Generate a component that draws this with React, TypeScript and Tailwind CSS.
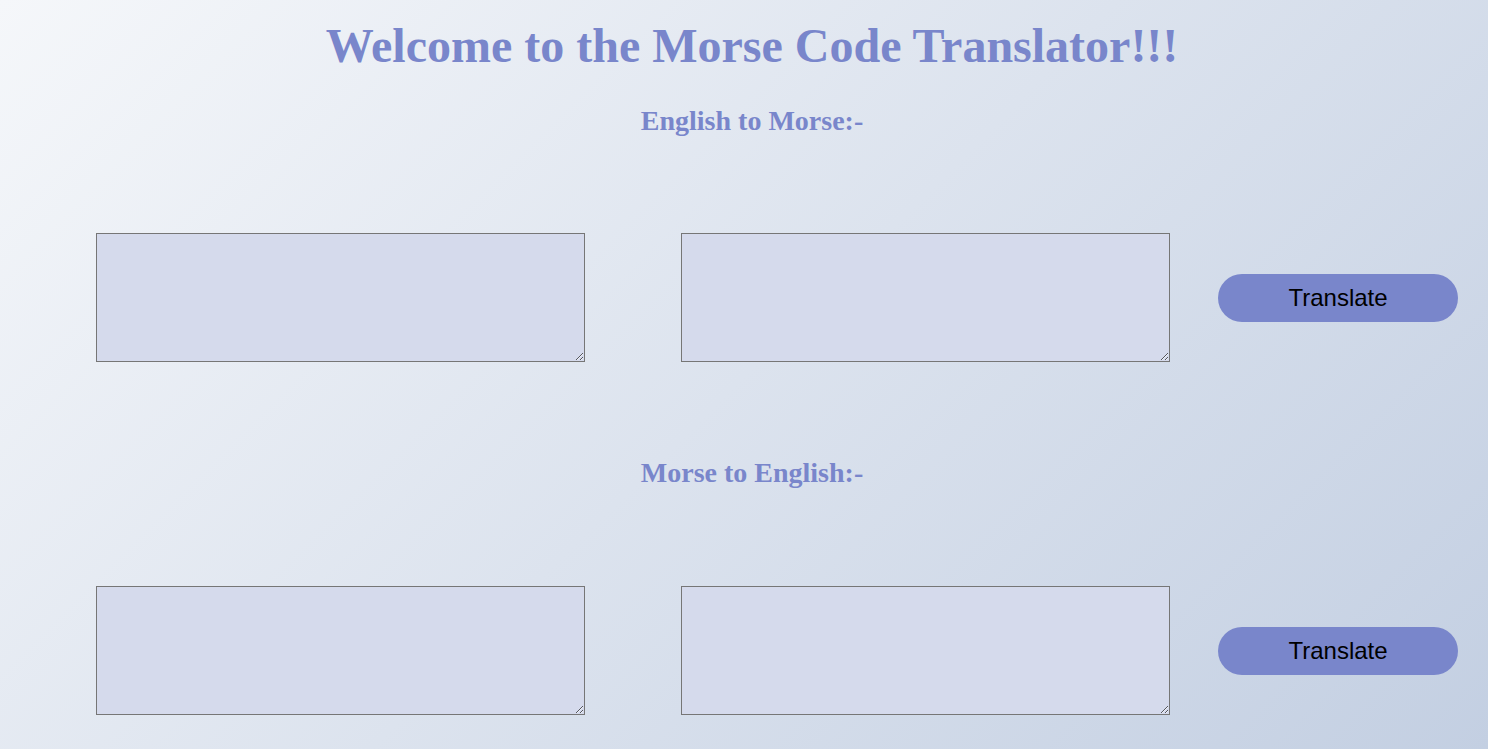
export default function App() {
  const section = (title: string, rowGap: string) => (
    <div className="flex flex-col">
      <h2 className="pl-4 pt-px text-center text-[28px] font-bold leading-[32px] text-[#7986cb]">
        {title}
      </h2>
      <div className={`${rowGap} flex items-center pl-[96px]`}>
        <textarea className="h-[129px] w-[489px] border border-[#767676] bg-[#d5daec] outline-none" />
        <textarea className="ml-[96px] h-[129px] w-[489px] border border-[#767676] bg-[#d5daec] outline-none" />
        <button className="ml-[48px] h-[48px] w-[240px] rounded-full bg-[#7986cb] font-['Liberation_Sans',Arial,sans-serif] text-[24px] leading-none text-black">
          Translate
        </button>
      </div>
    </div>
  );

  return (
    <div className="min-h-[749px] bg-[linear-gradient(135deg,#f5f7fa_0%,#c3cfe2_100%)] font-['Liberation_Serif','Times_New_Roman',serif]">
      <h1 className="pl-4 pt-[18px] text-center text-[48px] font-bold leading-[56px] text-[#7986cb]">
        Welcome to the Morse Code Translator!!!
      </h1>
      <div className="mt-[30px]">{section("English to Morse:-", "mt-[96px]")}</div>
      <div className="mt-[94px]">{section("Morse to English:-", "mt-[97px]")}</div>
    </div>
  );
}
